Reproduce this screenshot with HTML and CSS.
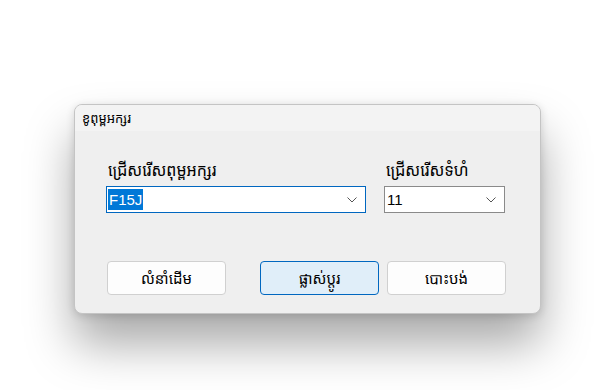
FILE: index.html
```html
<!DOCTYPE html>
<html lang="km">
<head>
  <meta charset="UTF-8">
  <title>ពុម្ពអក្សរ</title>
  <link rel="stylesheet" href="styles.css">
</head>
<body>
  <div class="dialog">
    <div class="title-bar">ខូពុម្ពអក្សរ</div>
    <div class="dialog-body">
      <div class="fields">
        <div class="field field-font">
          <label class="field-label">ជ្រើសរើសពុម្ពអក្សរ</label>
          <div class="combo combo-active">
            <span class="combo-value selected">F15J</span>
            <svg class="chevron" width="10" height="6" viewBox="0 0 10 6"><path d="M0.5 0.5 L5 5 L9.5 0.5" fill="none" stroke="#555" stroke-width="1"/></svg>
          </div>
        </div>
        <div class="field field-size">
          <label class="field-label">ជ្រើសរើសទំហំ</label>
          <div class="combo">
            <span class="combo-value">11</span>
            <svg class="chevron" width="10" height="6" viewBox="0 0 10 6"><path d="M0.5 0.5 L5 5 L9.5 0.5" fill="none" stroke="#555" stroke-width="1"/></svg>
          </div>
        </div>
      </div>
      <div class="buttons">
        <button class="btn">លំនាំដើម</button>
        <button class="btn btn-default">ផ្លាស់ប្ដូរ</button>
        <button class="btn">បោះបង់</button>
      </div>
    </div>
  </div>
</body>
</html>
```

FILE: styles.css
```css
html, body {
  min-height: 390px;
}

body {
  margin: 0;
  padding: 104px 0 0 74px;
  box-sizing: border-box;
  background: #ffffff;
  font-family: "Noto Sans Khmer", "Khmer OS System", "Liberation Sans", sans-serif;
  color: #000;
}

/* window */
.dialog {
  width: 465px;
  height: 208px;
  border: 1px solid #c4c4c4;
  border-radius: 8px;
  background: #efefef;
  box-shadow: 0 30px 48px rgba(0, 0, 0, 0.34), 0 2px 8px rgba(0, 0, 0, 0.14);
  overflow: hidden;
}

.title-bar {
  height: 26px;
  padding-left: 7px;
  font-size: 13px;
  line-height: 27px;
  background: #f3f3f3;
}

.dialog-body {
  padding: 28px 0 0 31px;
}

.fields {
  display: flex;
  gap: 18px;
}

.field {
  display: flex;
  flex-direction: column;
}

.field-font { width: 260px; }
.field-size { width: 121px; }

.field-label {
  font-size: 16px;
  line-height: 22px;
  height: 22px;
  padding-left: 2px;
  margin-bottom: 5px;
}

.combo {
  height: 25px;
  border: 1px solid #8a8a8a;
  background: #fff;
  display: flex;
  align-items: center;
  justify-content: space-between;
  padding: 0 8px 0 1px;
  font-family: "Liberation Sans", Arial, sans-serif;
  font-size: 15px;
}

.combo-active {
  border-color: #0067c0;
}

.combo-value {
  line-height: 21px;
  padding: 0 1px;
}

.combo-value.selected {
  background: #0078d7;
  color: #fff;
}

.chevron { margin-top: 1px; }

.buttons {
  display: flex;
  margin-top: 48px;
  padding-left: 1px;
}

.btn {
  width: 119px;
  height: 34px;
  border: 1px solid #d0d0d0;
  border-radius: 4px;
  background: #fdfdfd;
  font-family: inherit;
  font-size: 15px;
  color: #000;
  padding: 0;
}

.btn-default {
  margin: 0 8px 0 34px;
  border-color: #0067c0;
  background: #e0eef9;
}
```
